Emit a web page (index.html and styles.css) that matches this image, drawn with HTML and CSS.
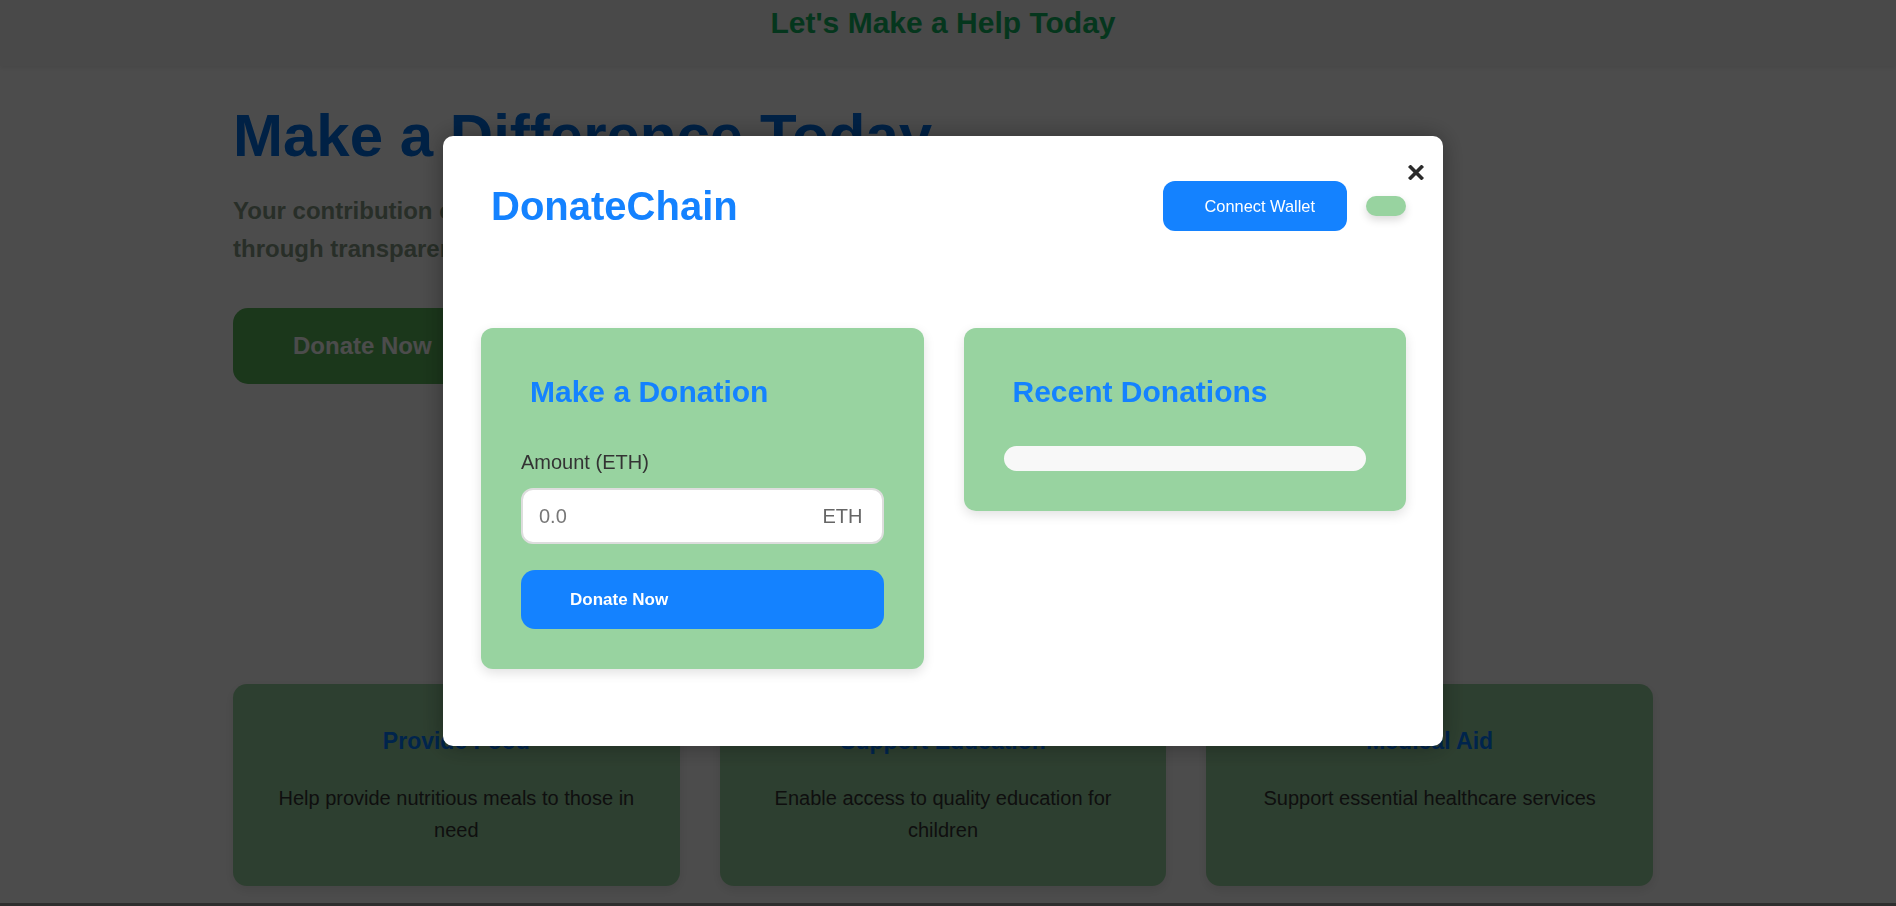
FILE: index.html
```html
<!DOCTYPE html>
<html lang="en">
<head>
<meta charset="utf-8">
<title>DonateChain</title>
<link rel="stylesheet" href="styles.css">
</head>
<body>
<header class="site-header">
  <h1 class="site-title">Let's Make a Help Today</h1>
</header>

<main class="page">
  <section class="hero">
    <h2 class="hero-title">Make a Difference Today</h2>
    <p class="hero-text">Your contribution can change lives around the world through transparent and secure blockchain technology.</p>
    <a class="hero-btn" href="#">Donate Now</a>
  </section>

  <section class="features">
    <article class="feature">
      <h3 class="feature-title">Provide Food</h3>
      <p class="feature-text">Help provide nutritious meals to those in need</p>
    </article>
    <article class="feature">
      <h3 class="feature-title">Support Education</h3>
      <p class="feature-text">Enable access to quality education for children</p>
    </article>
    <article class="feature">
      <h3 class="feature-title">Medical Aid</h3>
      <p class="feature-text">Support essential healthcare services</p>
    </article>
  </section>
</main>

<footer class="site-footer">
  <p class="footer-text">&copy; 2024 DonateChain. All rights reserved.</p>
</footer>

<div class="overlay">
  <div class="modal">
    <button class="modal-close" aria-label="Close">
      <svg width="16" height="15" viewBox="0 0 16 15"><path d="M2.5 2 L13.5 13 M13.5 2 L2.5 13" stroke="#2b2b2b" stroke-width="3.6" stroke-linecap="square"/></svg>
    </button>
    <div class="modal-header">
      <h2 class="brand">DonateChain</h2>
      <div class="header-actions">
        <button class="connect-btn">Connect Wallet</button>
        <span class="toggle"></span>
      </div>
    </div>
    <div class="modal-grid">
      <section class="panel">
        <h3 class="panel-title">Make a Donation</h3>
        <label class="field-label" for="amount">Amount (ETH)</label>
        <div class="input-wrap">
          <input class="amount-input" id="amount" type="text" placeholder="0.0">
          <span class="input-suffix">ETH</span>
        </div>
        <button class="donate-btn">Donate Now</button>
      </section>
      <section class="panel">
        <h3 class="panel-title">Recent Donations</h3>
        <div class="donation-list"></div>
      </section>
    </div>
  </div>
</div>
</body>
</html>
```
FILE: styles.css
```css
* {
  box-sizing: border-box;
}

html, body {
  overflow: hidden;
}

body {
  margin: 0;
  font-family: "Liberation Sans", Arial, sans-serif;
  background: #ffffff;
  color: #333333;
}

/* ---------- page header ---------- */
.site-header {
  background: #f3f3f3;
  padding: 6px 10px 26px 0;
  text-align: center;
  box-shadow: 0 2px 5px rgba(0, 0, 0, 0.08);
}

.site-title {
  margin: 0;
  font-size: 30px;
  font-weight: bold;
  color: #12b462;
}

/* ---------- page body ---------- */
.page {
  width: 1420px;
  margin-left: calc(50% - 715px);
}

.hero {
  padding-top: 35px;
}

.hero-title {
  margin: 0 0 22px;
  font-size: 60px;
  font-weight: bold;
  color: #0070e8;
}

.hero-text {
  margin: 0 0 39px;
  max-width: 680px;
  font-size: 24px;
  line-height: 38.4px;
  font-weight: bold;
  color: #859c85;
}

.hero-btn {
  display: inline-block;
  height: 76px;
  line-height: 76px;
  padding: 0 60px;
  border-radius: 15px;
  background: #5cb85c;
  color: #ffffff;
  font-size: 24px;
  font-weight: bold;
  text-decoration: none;
}

.features {
  margin-top: 300px;
  display: grid;
  grid-template-columns: repeat(3, 1fr);
  gap: 40px;
}

.feature {
  background: #98d3a0;
  border-radius: 14px;
  padding: 44px 40px 40px;
  text-align: center;
  box-shadow: 0 4px 12px rgba(0, 0, 0, 0.1);
}

.feature-title {
  margin: 0 0 27px;
  font-size: 23px;
  font-weight: bold;
  color: #007bff;
}

.feature-text {
  margin: 0;
  font-size: 20px;
  line-height: 32px;
  color: #333333;
}

.site-footer {
  margin-top: 17px;
  background: #999999;
  padding: 30px 0;
  text-align: center;
}

.footer-text {
  margin: 0;
  color: #ffffff;
}

/* ---------- modal ---------- */
.overlay {
  position: fixed;
  inset: 0;
  background: rgba(0, 0, 0, 0.7);
  display: flex;
  justify-content: center;
  align-items: flex-start;
  padding: 136px 10px 0 0;
}

.modal {
  position: relative;
  width: 1000px;
  background: #ffffff;
  border-radius: 10px;
  padding: 38px 37px 77px 38px;
  box-shadow: 0 0 24px rgba(0, 0, 0, 0.35);
}

.modal-close {
  position: absolute;
  top: 29px;
  right: 19px;
  border: 0;
  padding: 0;
  background: none;
  line-height: 0;
  cursor: pointer;
}

.modal-header {
  display: flex;
  align-items: center;
  justify-content: space-between;
  padding: 7px 0 7px 10px;
  margin-bottom: 90px;
}

.brand {
  margin: 0;
  font-size: 40px;
  font-weight: bold;
  color: #1482ff;
}

.header-actions {
  display: flex;
  align-items: center;
  gap: 19px;
}

.connect-btn {
  height: 50px;
  padding: 0 32px 0 41px;
  border: 0;
  border-radius: 12px;
  background: #1482ff;
  color: #ffffff;
  font-family: inherit;
  font-size: 16.4px;
}

.toggle {
  display: block;
  width: 40px;
  height: 20px;
  border-radius: 10px;
  background: #98d3a0;
  box-shadow: 0 4px 8px rgba(0, 0, 0, 0.15);
}

.modal-grid {
  display: grid;
  grid-template-columns: 1fr 1fr;
  gap: 40px;
  align-items: start;
}

.panel {
  background: #98d3a0;
  border-radius: 12px;
  padding: 40px;
  box-shadow: 0 4px 12px rgba(0, 0, 0, 0.12);
}

.panel-title {
  margin: 0 0 29px;
  padding: 7px 9px 8px;
  font-size: 30px;
  line-height: 34px;
  font-weight: bold;
  color: #1482ff;
}

.field-label {
  display: block;
  padding-top: 3px;
  margin-bottom: 12px;
  font-size: 20px;
  line-height: 27px;
  color: #333333;
}

.input-wrap {
  position: relative;
}

.amount-input {
  display: block;
  width: 100%;
  height: 56px;
  padding: 0 16px;
  border: 2px solid #dddddd;
  border-radius: 12px;
  background: #ffffff;
  font-family: inherit;
  font-size: 20px;
  color: #333333;
  outline: none;
}

.amount-input::placeholder {
  color: #777777;
}

.input-suffix {
  position: absolute;
  right: 21px;
  top: 50%;
  transform: translateY(-50%);
  font-size: 20px;
  color: #666666;
}

.donate-btn {
  display: block;
  width: 100%;
  height: 59px;
  margin-top: 26px;
  padding: 0 0 0 49px;
  border: 0;
  border-radius: 14px;
  background: #1482ff;
  color: #ffffff;
  font-family: inherit;
  font-size: 17px;
  font-weight: bold;
  text-align: left;
}

.donation-list {
  height: 25px;
  border-radius: 13px;
  background: #f8f8f8;
}
```
